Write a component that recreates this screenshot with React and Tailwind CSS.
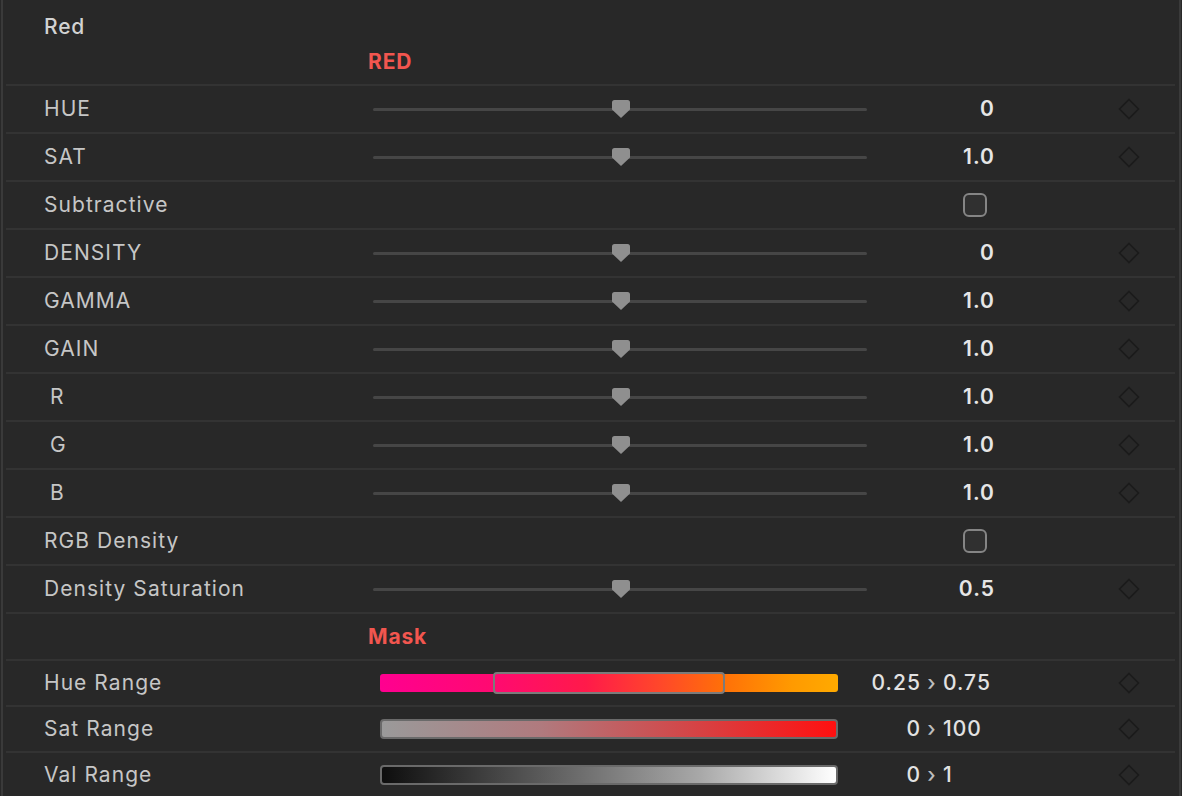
import React from 'react';

const font = { fontFamily: 'Inter, "Liberation Sans", sans-serif' };

const Thumb = () => (
    <svg width="18" height="18" viewBox="0 0 18 18" className="absolute left-[239px] -top-[8px]">
        <path d="M2.5 0 H15.5 Q18 0 18 2.5 V9.5 L9 18 L0 9.5 V2.5 Q0 0 2.5 0 Z" fill="#8f8f8f" />
    </svg>
);

const Diamond = ({ className }) => (
    <svg width="22" height="22" viewBox="0 0 22 22" className={className}>
        <path d="M11 1.5 L20.5 11 L11 20.5 L1.5 11 Z" fill="none" stroke="#1b1b1b" strokeWidth="1.6" />
    </svg>
);

const Checkbox = () => (
    <div className="ml-[590px] w-[24px] h-[24px] rounded-[6px] border-2 border-[#858585] bg-[#303030]" />
);

const SliderRow = ({ label, value, indent }) => (
    <div className="flex items-center h-[48px] border-t-2 border-[#333333]">
        <div className={`w-[367px] shrink-0 text-[21px] tracking-[0.05em] text-[#c6c6c6] ${indent ? 'pl-[44px]' : 'pl-[38px]'}`}>{label}</div>
        <div className="relative w-[494px] h-[3px] bg-[#464646] rounded-full shrink-0">
            <Thumb />
        </div>
        <div className="w-[128px] shrink-0 text-right text-[21px] tracking-[0.05em] font-semibold text-[#e6e6e6]">{value}</div>
        <Diamond className="ml-[123px] shrink-0" />
    </div>
);

const CheckRow = ({ label }) => (
    <div className="flex items-center h-[48px] border-t-2 border-[#333333]">
        <div className="w-[367px] shrink-0 pl-[38px] text-[21px] tracking-[0.05em] text-[#c6c6c6]">{label}</div>
        <Checkbox />
    </div>
);

const RangeRow = ({ label, bar, from, to, h }) => (
    <div className={`flex items-center border-t-2 border-[#333333] ${h}`}>
        <div className="w-[374px] shrink-0 pl-[38px] text-[21px] tracking-[0.05em] text-[#c6c6c6]">{label}</div>
        <div className="w-[458px] shrink-0">{bar}</div>
        <div className="flex items-center w-[162px] shrink-0 text-[21px] tracking-[0.05em] text-[#e2e2e2] font-medium">
            <span className="w-[83px] text-right">{from}</span>
            <span className="w-[22px] text-center text-[#bdbdbd]">›</span>
            <span className="w-[57px]">{to}</span>
        </div>
        <Diamond className="ml-[118px] shrink-0" />
    </div>
);

const HueBar = (
    <div className="relative h-[18px] rounded-[3px] bg-[linear-gradient(to_right,#ff0090,#ff0a70_25%,#ff1a4a_45%,#ff4a28_62%,#ff7008_75%,#ff9a00_90%,#ffaa00)]">
        <div className="absolute left-[113px] w-[232px] -top-[2px] -bottom-[2px] rounded-[4px] border-2 border-[#7b7b7b]" />
    </div>
);

const SatBar = (
    <div className="h-[20px] rounded-[4px] border-2 border-[#6a6a6a] bg-[linear-gradient(to_right,#9a9a9a,#b07a7e_35%,#d04a4c_65%,#ff1010)]" />
);

const ValBar = (
    <div className="h-[20px] rounded-[4px] border-2 border-[#6a6a6a] bg-[linear-gradient(to_right,#0e0e0e,#5a5a5a_35%,#a8a8a8_70%,#ffffff)]" />
);

export default function App() {
    return (
        <div style={font} className="w-[1182px] h-[796px] bg-[#282828] pl-[1px] pr-[1px] overflow-hidden">
            <div className="h-full border-x-2 border-[#3a3a3a] pl-[3px] pr-[4px]">
                <div className="h-[84px] pt-[14px]">
                    <div className="pl-[38px] text-[21px] tracking-[0.04em] leading-[26px] font-medium text-[#d2d2d2]">Red</div>
                    <div className="mt-[9px] pl-[362px] text-[21px] tracking-[0.04em] leading-[26px] font-bold text-[#f2564f]">RED</div>
                </div>
                <SliderRow label="HUE" value="0" />
                <SliderRow label="SAT" value="1.0" />
                <CheckRow label="Subtractive" />
                <SliderRow label="DENSITY" value="0" />
                <SliderRow label="GAMMA" value="1.0" />
                <SliderRow label="GAIN" value="1.0" />
                <SliderRow label="R" value="1.0" indent />
                <SliderRow label="G" value="1.0" indent />
                <SliderRow label="B" value="1.0" indent />
                <CheckRow label="RGB Density" />
                <SliderRow label="Density Saturation" value="0.5" />
                <div className="flex items-center h-[47px] border-t-2 border-[#333333] pl-[362px] text-[21px] tracking-[0.04em] font-bold text-[#f2564f]">Mask</div>
                <RangeRow label="Hue Range" bar={HueBar} from="0.25" to="0.75" h="h-[46px]" />
                <RangeRow label="Sat Range" bar={SatBar} from="0" to="100" h="h-[46px]" />
                <RangeRow label="Val Range" bar={ValBar} from="0" to="1" h="h-[46px]" />
            </div>
        </div>
    );
}
